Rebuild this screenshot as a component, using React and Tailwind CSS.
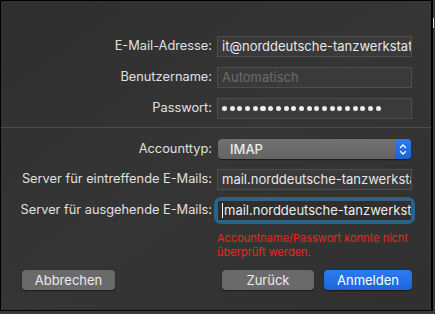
import React from "react";

function Row({ label, children, className = "" }) {
  return (
    <div className={`flex items-center ${className}`}>
      <div className="flex-1 text-right pr-[5px] text-[12.8px] text-[#e0e0e0] whitespace-nowrap leading-none">
        {label}
      </div>
      <div className="w-[195px] shrink-0">{children}</div>
    </div>
  );
}

function Field({ value, placeholder, dim }) {
  return (
    <div className="h-[21px] bg-[#3a3a3a] border border-[#4e4e4e] flex items-center pl-[4px] overflow-hidden">
      <span
        className={`text-[13px] whitespace-nowrap leading-none ${
          dim ? "text-[#6c6c6c]" : "text-[#e8e8e8]"
        }`}
      >
        {value || placeholder}
      </span>
    </div>
  );
}

export default function App() {
  return (
    <div
      className="w-[435px] h-[314px] bg-[#3b3b3b] flex flex-col overflow-hidden"
      style={{ fontFamily: "Inter, 'Liberation Sans', sans-serif" }}
    >
      <div className="flex h-[311px]">
        <div className="w-[433px] h-[311px] border border-black border-r-2 bg-gradient-to-br from-[#2f2f2f] via-[#353535] to-[#303030] flex flex-col">
          <div className="pt-[35px] pr-[19px] flex flex-col">
            <Row label="E-Mail-Adresse:">
              <Field value="it@norddeutsche-tanzwerkstatt.de" />
            </Row>
            <Row label="Benutzername:" className="mt-[10px]">
              <Field placeholder="Automatisch" dim />
            </Row>
            <Row label="Passwort:" className="mt-[10px]">
              <div className="h-[21px] bg-[#3a3a3a] border border-[#4e4e4e] flex items-center pl-[4px] gap-[2.6px] overflow-hidden">
                {Array.from({ length: 21 }).map((_, i) => (
                  <span key={i} className="w-[5.1px] h-[5.1px] rounded-full bg-[#ececec] shrink-0" />
                ))}
              </div>
            </Row>
          </div>
          <div className="h-px bg-[#4d4d4d] mt-[8px]" />
          <div className="pr-[19px] flex flex-col mt-[11px]">
            <Row label="Accounttyp:">
              <div className="h-[20px] mx-px rounded-[4px] bg-gradient-to-b from-[#717171] to-[#646464] flex items-center overflow-hidden shadow-[0_0.5px_1px_rgba(0,0,0,0.5)]">
                <span className="flex-1 pl-[12px] text-[13px] font-medium text-[#ececec] leading-none">IMAP</span>
                <div className="w-[16px] h-full bg-gradient-to-b from-[#2a7cf0] to-[#1b64d6] flex items-center justify-center">
                  <svg width="8" height="13" viewBox="0 0 8 13" fill="none" stroke="white" strokeWidth="1.4" strokeLinecap="round" strokeLinejoin="round">
                    <path d="M1.5 4.5 L4 2 L6.5 4.5" />
                    <path d="M1.5 8.5 L4 11 L6.5 8.5" />
                  </svg>
                </div>
              </div>
            </Row>
            <Row label="Server für eintreffende E-Mails:" className="mt-[10px]">
              <Field value="mail.norddeutsche-tanzwerkstatt.de" />
            </Row>
            <Row label="Server für ausgehende E-Mails:" className="mt-[10px]">
              <div className="rounded-[4px] ring-[3px] ring-[#1f6790]">
                <div className="h-[21px] bg-[#2e2e2e] border border-[#3d5f75] flex items-center pl-[4px] overflow-hidden">
                  <span className="w-px h-[15px] bg-white shrink-0 mr-px" />
                  <span className="text-[13px] whitespace-nowrap leading-none text-[#ededed]">
                    mail.norddeutsche-tanzwerkstatt.de
                  </span>
                </div>
              </div>
            </Row>
            <div className="flex mt-[10px]">
              <div className="flex-1" />
              <div className="w-[195px] text-[11px] leading-[14px] text-[#e32b22]">
                Accountname/Passwort konnte nicht überprüft werden.
              </div>
            </div>
          </div>
          <div className="flex items-center mt-[11px] pl-[21px] pr-[19px]">
            <button className="w-[93px] h-[20px] rounded-[4px] bg-[#6a6a6a] text-[13px] text-[#ececec] leading-none shadow-[0_0.5px_1px_rgba(0,0,0,0.5)]">
              Abbrechen
            </button>
            <div className="flex-1" />
            <button className="w-[92px] h-[20px] rounded-[4px] bg-[#6a6a6a] text-[13px] text-[#ececec] leading-none shadow-[0_0.5px_1px_rgba(0,0,0,0.5)]">
              Zurück
            </button>
            <button className="ml-[10px] w-[88px] h-[20px] rounded-[4px] bg-gradient-to-b from-[#2a7cf0] to-[#1c66d8] text-[13px] text-white leading-none shadow-[0_0.5px_1px_rgba(0,0,0,0.5)]">
              Anmelden
            </button>
          </div>
        </div>
        <div className="flex-1 bg-[#3c3c3c] pt-[18px]">
          <div className="w-px h-[10px] bg-[#d8d8d8]" />
        </div>
      </div>
      <div className="flex-1 bg-[#3a3a3a]" />
    </div>
  );
}
